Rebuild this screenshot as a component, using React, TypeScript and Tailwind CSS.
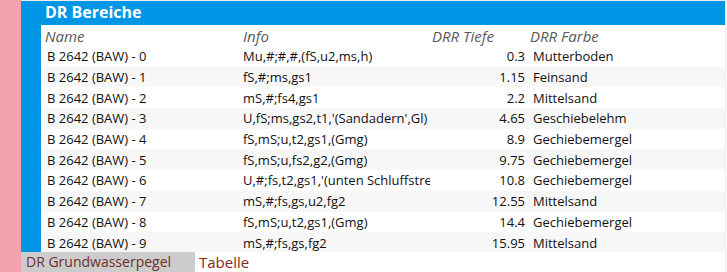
import React from "react";

const rows = [
  ["B 2642 (BAW) - 0", "Mu,#;#,#,(fS,u2,ms,h)", "0.3", "Mutterboden"],
  ["B 2642 (BAW) - 1", "fS,#;ms,gs1", "1.15", "Feinsand"],
  ["B 2642 (BAW) - 2", "mS,#;fs4,gs1", "2.2", "Mittelsand"],
  ["B 2642 (BAW) - 3", "U,fS;ms,gs2,t1,'(Sandadern',Gl)", "4.65", "Geschiebelehm"],
  ["B 2642 (BAW) - 4", "fS,mS;u,t2,gs1,(Gmg)", "8.9", "Gechiebemergel"],
  ["B 2642 (BAW) - 5", "fS,mS;u,fs2,g2,(Gmg)", "9.75", "Gechiebemergel"],
  ["B 2642 (BAW) - 6", "U,#;fs,t2,gs1,'(unten Schluffstreif", "10.8", "Gechiebemergel"],
  ["B 2642 (BAW) - 7", "mS,#;fs,gs,u2,fg2", "12.55", "Mittelsand"],
  ["B 2642 (BAW) - 8", "fS,mS;u,t2,gs1,(Gmg)", "14.4", "Gechiebemergel"],
  ["B 2642 (BAW) - 9", "mS,#;fs,gs,fg2", "15.95", "Mittelsand"],
];

export default function App() {
  return (
    <div
      className="w-[727px] h-[272px] flex bg-white overflow-hidden text-[13px] text-[#111]"
      style={{ fontFamily: '"Open Sans", "Noto Sans", sans-serif' }}
    >
      <div className="w-[21px] shrink-0 bg-[#f2a1ad]" />
      <div className="w-[704px] shrink-0 flex flex-col">
        <div className="h-px bg-[#eeeeee]" />
        <div className="h-[24px] bg-[#0096e6] text-white font-bold text-[16px] leading-[23px] pl-[24px]">
          DR Bereiche
        </div>
        <div className="flex flex-1 min-h-0 overflow-hidden">
          <div className="w-[20px] shrink-0 bg-[#0096e6]" />
          <div className="flex-1 flex flex-col border-b border-[#e2e2e2]">
            <div className="h-[21px] shrink-0 flex items-center italic text-[#5a5a5a] text-[15px] leading-[20px]">
              <div className="w-[202px] pl-[4px]">Name</div>
              <div className="w-[189px]">Info</div>
              <div className="w-[98px] whitespace-nowrap">DRR Tiefe</div>
              <div className="whitespace-nowrap">DRR Farbe</div>
            </div>
            {rows.map((r, i) => (
              <div
                key={i}
                className={`h-[20.7px] shrink-0 flex items-center leading-[18px] ${i % 2 === 1 ? "bg-[#f7f7f7]" : "bg-white"}`}
              >
                <div className="w-[202px] pl-[6px] whitespace-nowrap">{r[0]}</div>
                <div className="w-[187px] whitespace-nowrap overflow-hidden">{r[1]}</div>
                <div className="w-[97px] text-right pr-[2px]">{r[2]}</div>
                <div className="pl-[6px] whitespace-nowrap">{r[3]}</div>
              </div>
            ))}
          </div>
        </div>
        <div className="h-[20px] flex shrink-0">
          <div className="w-[174px] bg-[#cccccc] text-[#6b2f2f] text-[14px] leading-[20px] pl-[5px] whitespace-nowrap">
            DR Grundwasserpegel
          </div>
          <div className="flex-1 text-[#8a1f1f] text-[15px] leading-[20px] pl-[4px]">
            Tabelle
          </div>
        </div>
      </div>
      <div className="w-px shrink-0 bg-[#ececec]" />
    </div>
  );
}
